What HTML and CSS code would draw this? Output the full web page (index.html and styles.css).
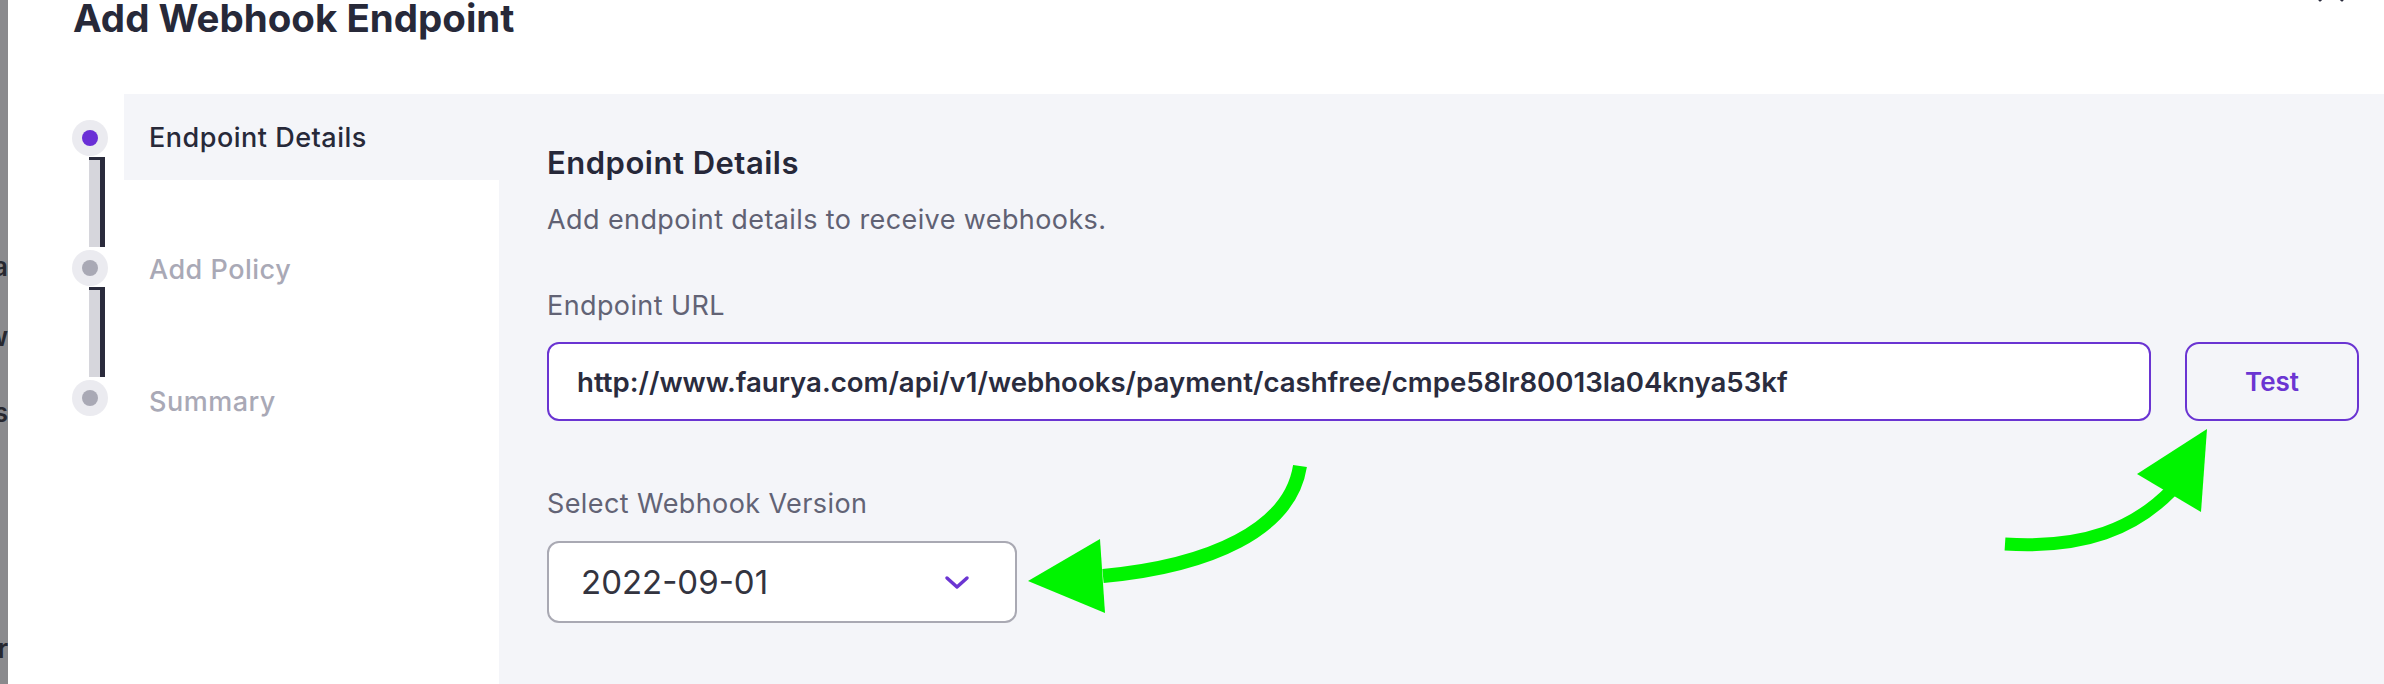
FILE: index.html
```html
<!DOCTYPE html>
<html lang="en">
<head>
<meta charset="utf-8">
<title>Add Webhook Endpoint</title>
<link rel="stylesheet" href="styles.css">
</head>
<body>
<div class="page">
  <div class="backdrop">
    <div class="bg-line l1"><span>Data</span></div>
    <div class="bg-line l2"><span>Flow</span></div>
    <div class="bg-line l3"><span>Webhooks</span></div>
    <div class="bg-line l4"><span>Partner</span></div>
  </div>
  <div class="modal">
    <button class="close" aria-label="Close">
      <svg width="28" height="28" viewBox="0 0 28 28"><path d="M3 3 L25 25 M25 3 L3 25" stroke="#2a2b3c" stroke-width="3" stroke-linecap="round" fill="none"/></svg>
    </button>
    <header class="modal-header">
      <h1 class="title">Add Webhook Endpoint</h1>
    </header>
    <div class="modal-body">
      <aside class="stepper">
        <div class="markers">
          <span class="dot active"></span>
          <span class="connector"></span>
          <span class="dot"></span>
          <span class="connector"></span>
          <span class="dot"></span>
        </div>
        <ul class="labels">
          <li class="step active">Endpoint Details</li>
          <li class="step">Add Policy</li>
          <li class="step">Summary</li>
        </ul>
      </aside>
      <main class="panel">
        <h2 class="panel-title">Endpoint Details</h2>
        <p class="panel-sub">Add endpoint details to receive webhooks.</p>
        <div class="field-label">Endpoint URL</div>
        <div class="url-row">
          <div class="url-input">http://www.faurya.com/api/v1/webhooks/payment/cashfree/cmpe58lr80013la04knya53kf</div>
          <button class="test-btn">Test</button>
        </div>
        <div class="field-label second">Select Webhook Version</div>
        <div class="select">
          <span class="select-value">2022-09-01</span>
          <svg class="chevron" width="26" height="15" viewBox="0 0 26 15"><path d="M3 3 L13 12 L23 3" stroke="#6b35d2" stroke-width="3.5" stroke-linecap="round" stroke-linejoin="round" fill="none"/></svg>
        </div>
      </main>
    </div>
  </div>
  <svg class="annotations" width="2384" height="684" viewBox="0 0 2384 684">
    <path d="M1300 466 C1290 530 1210 566 1103 576" stroke="#00f400" stroke-width="14" fill="none"/>
    <polygon points="1028,581 1100,539 1105,613" fill="#00f400"/>
    <path d="M2005 544 C2085 549 2135 528 2172 490" stroke="#00f400" stroke-width="13" fill="none"/>
    <polygon points="2137,474 2207,429 2201,512" fill="#00f400"/>
  </svg>
</div>
</body>
</html>
```

FILE: styles.css
```css
* { box-sizing: border-box; }
html, body { margin: 0; padding: 0; }
body {
  font-family: Inter, "Noto Sans", sans-serif;
  color: #272939;
  width: 2384px;
  height: 684px;
  overflow: hidden;
}
.page {
  position: relative;
  display: flex;
  width: 2384px;
  height: 684px;
  overflow: hidden;
}
.backdrop {
  width: 8px;
  flex-shrink: 0;
  background: #8a8a8d;
  overflow: hidden;
  display: flex;
  flex-direction: column;
}
.bg-line {
  display: flex;
  justify-content: flex-end;
  height: 32px;
  line-height: 32px;
  font-size: 26px;
  font-weight: 600;
  color: #26272f;
  white-space: nowrap;
}
.bg-line span { flex-shrink: 0; }
.l1 { margin-top: 251px; }
.l2 { margin-top: 38px; }
.l3 { margin-top: 44px; }
.l4 { margin-top: 204px; }

.modal {
  position: relative;
  flex: 1;
  background: #ffffff;
  display: flex;
  flex-direction: column;
}
.close {
  position: absolute;
  top: -25px;
  right: 39px;
  border: 0;
  padding: 0;
  background: none;
  width: 28px;
  height: 28px;
}
.close svg { display: block; }
.modal-header {
  height: 94px;
  flex-shrink: 0;
  padding-left: 65px;
}
.title {
  margin: -2px 0 0;
  font-size: 38.5px;
  line-height: 40px;
  font-weight: 700;
  color: #272939;
}
.modal-body {
  flex: 1;
  display: flex;
}
.stepper {
  width: 491px;
  flex-shrink: 0;
  display: flex;
  padding-left: 64px;
  gap: 16px;
}
.markers {
  width: 36px;
  padding-top: 26px;
  display: flex;
  flex-direction: column;
}
.dot {
  width: 36px;
  height: 36px;
  border-radius: 50%;
  background: #ebebf0;
  display: flex;
  align-items: center;
  justify-content: center;
}
.dot::after {
  content: "";
  width: 16px;
  height: 16px;
  border-radius: 50%;
  background: #a9a9b5;
}
.dot.active::after { background: #6a2fd6; }
.connector {
  width: 16px;
  height: 90px;
  margin: 1px 0 3px 17px;
  background: #d6d6dc;
  border-right: 5px solid #2a2b3c;
  border-top: 3px solid #2a2b3c;
  border-left: 0 solid transparent;
}
.labels {
  flex: 1;
  list-style: none;
  margin: 0;
  padding: 0;
  display: flex;
  flex-direction: column;
  gap: 46px;
}
.step {
  height: 86px;
  display: flex;
  align-items: center;
  padding-left: 25px;
  font-size: 27px;
  letter-spacing: 0.5px;
  font-weight: 500;
  color: #a9a9b6;
}
.step.active {
  background: #f4f5f9;
  color: #272939;
}
.panel {
  flex: 1;
  background: #f4f5f9;
  padding: 51px 25px 0 48px;
  display: flex;
  flex-direction: column;
}
.panel-title {
  margin: 0;
  font-size: 31px;
  letter-spacing: 0.5px;
  line-height: 36px;
  font-weight: 600;
  color: #262839;
}
.panel-sub {
  margin: 23px 0 0;
  font-size: 27px;
  letter-spacing: 0.4px;
  line-height: 32px;
  color: #606173;
}
.field-label {
  margin-top: 54px;
  font-size: 27px;
  letter-spacing: 0.4px;
  line-height: 32px;
  color: #626375;
}
.field-label.second { margin-top: 67px; }
.url-row {
  margin-top: 20px;
  display: flex;
  gap: 34px;
  height: 79px;
}
.url-input {
  flex: 1;
  height: 79px;
  background: #ffffff;
  border: 2px solid #6a34d2;
  border-radius: 12px;
  padding-left: 28px;
  display: flex;
  align-items: center;
  font-size: 27.6px;
  font-weight: 600;
  color: #2a2c3e;
  white-space: nowrap;
  overflow: hidden;
}
.test-btn {
  width: 174px;
  height: 79px;
  flex-shrink: 0;
  background: transparent;
  border: 2px solid #6a34d2;
  border-radius: 14px;
  font-family: inherit;
  font-size: 26px;
  font-weight: 600;
  color: #6b35d2;
}
.select {
  margin-top: 21px;
  width: 470px;
  height: 82px;
  background: #ffffff;
  border: 2px solid #a9a9b3;
  border-radius: 12px;
  padding: 0 45px 0 32px;
  display: flex;
  align-items: center;
  justify-content: space-between;
}
.select-value {
  font-size: 33px;
  color: #33343f;
}
.chevron { display: block; }
.annotations {
  position: absolute;
  top: 0;
  left: 0;
  pointer-events: none;
}
```
